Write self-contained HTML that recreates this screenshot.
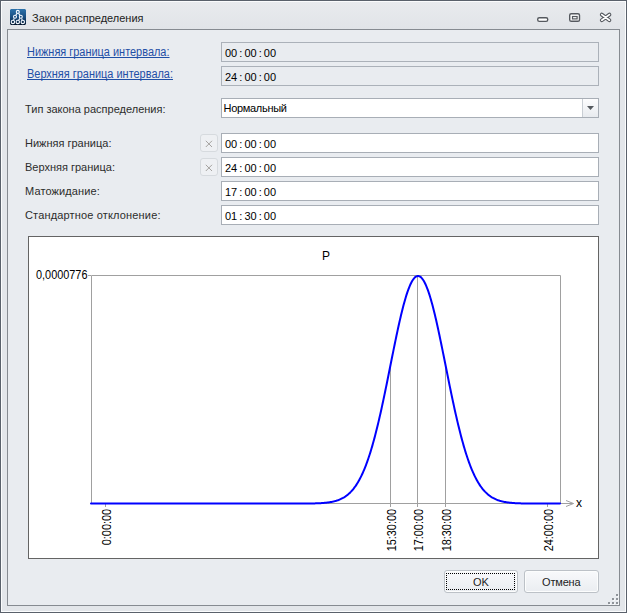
<!DOCTYPE html>
<html><head><meta charset="utf-8">
<style>
*{box-sizing:border-box;margin:0;padding:0}
html,body{width:627px;height:613px;overflow:hidden;background:#e9ecf0}
body{position:relative;font-family:"Liberation Sans",sans-serif;font-size:11px;color:#2c2c2c}
.abs{position:absolute}
#win{left:0;top:0;width:627px;height:613px;border:1px solid #5a616b;background:linear-gradient(#e9ebee,#e1e4e8 28px,#e3e6ea 29px);}
#hl{left:1px;top:1px;width:625px;height:611px;border:1px solid #fbfcfd;border-right-color:#fbfcfd;}
#panel{left:7px;top:29px;width:613px;height:577px;border:1px solid #868b91;background:#e9ecf0}
.t{position:absolute;white-space:pre;line-height:13px}
.link{color:#1f4fa6;text-decoration:underline;text-underline-offset:2px;text-decoration-skip-ink:none}
.edit{position:absolute;left:221px;width:378px;height:20px;border:1px solid #a8aeb6;background:#fff}
.edit.dis{background:#e9ecf0;border-color:#abb1b9}
.val{position:absolute;left:3px;top:4px;white-space:pre;line-height:13px;color:#000;word-spacing:-1px}
.xb{position:absolute;left:200px;width:18px;height:18px;border:1px solid #d6dade;border-radius:3px;background:#eef0f3}
.btn{position:absolute;top:570px;height:23px;border:1px solid #bcc1c7;border-radius:3px;background:linear-gradient(#f8f9fb,#eaedf1);box-shadow:inset 0 0 0 1px #fcfdfd;color:#1e1e1e;text-align:center;line-height:22px}
</style></head><body>
<div id="win" class="abs"></div>
<div id="hl" class="abs"></div>
<!-- title icon -->
<svg class="abs" style="left:10px;top:9px" width="16" height="16" viewBox="0 0 16 16">
<defs><linearGradient id="ig" x1="0" y1="0" x2="0" y2="1"><stop offset="0" stop-color="#2c72ab"/><stop offset="0.55" stop-color="#164a7c"/><stop offset="1" stop-color="#03152b"/></linearGradient></defs>
<path d="M1 0H15L16 1V15L15 16H1L0 15V1Z" fill="url(#ig)"/>
<g fill="none" stroke="#f4f9ff" stroke-width="1.1">
<path d="M7 4.4L5.8 6.3M8.6 4.4L10 6.3M4.2 9.3L3.6 11.1M10 9.3L8.6 11.1M11.6 9.3L12.2 11.1"/>
<circle cx="7.8" cy="2.9" r="1.5"/><circle cx="5" cy="7.8" r="1.5"/><circle cx="10.8" cy="7.8" r="1.5"/>
<circle cx="2.9" cy="12.9" r="1.7"/><circle cx="7.8" cy="12.9" r="1.7"/><circle cx="12.8" cy="12.9" r="1.7"/>
</g></svg>
<div class="t" style="left:32px;top:12px;color:#222">Закон распределения</div>
<!-- title buttons -->
<svg class="abs" style="left:530px;top:8px" width="90" height="20" viewBox="530 8 90 20">
<rect x="537.7" y="17.7" width="10" height="3.7" rx="1.6" fill="#fff" stroke="#55595f" stroke-width="1.4"/>
<rect x="569.7" y="13.7" width="9.8" height="7.6" rx="1.6" fill="#fff" stroke="#55595f" stroke-width="1.4"/>
<rect x="572.5" y="16.5" width="4.6" height="2.4" fill="#fff" stroke="#55595f" stroke-width="1.2"/>
<path d="M601.8 14.6 L609.4 20.2 M609.4 14.6 L601.8 20.2" stroke="#55595f" stroke-width="3.9" stroke-linecap="round"/>
<path d="M601.8 14.6 L609.4 20.2 M609.4 14.6 L601.8 20.2" stroke="#fff" stroke-width="1.7" stroke-linecap="round"/>
</svg>

<div id="panel" class="abs"></div>

<div class="t link" style="left:27px;top:45px;text-underline-offset:1px;font-size:12px;line-height:14px;transform:scaleX(0.912);transform-origin:0 0">Нижняя граница интервала:</div>
<div class="t link" style="left:27px;top:67px;text-underline-offset:1px;font-size:12px;line-height:14px;transform:scaleX(0.912);transform-origin:0 0">Верхняя граница интервала:</div>
<div class="edit dis" style="top:42px"><div class="val">00 : 00 : 00</div></div>
<div class="edit dis" style="top:66px"><div class="val">24 : 00 : 00</div></div>

<div class="t" style="left:25px;top:103px">Тип закона распределения:</div>
<div class="edit" style="top:98px"><div class="val" style="left:1.5px;top:3px;color:#000;word-spacing:0;letter-spacing:-0.3px">Нормальный</div>
<div class="abs" style="left:360px;top:0;width:16px;height:18px;border-left:1px solid #c9ced4;background:linear-gradient(#fdfdfe,#e8ebef)"></div>
<svg class="abs" style="left:365px;top:7px" width="7" height="4" viewBox="0 0 7 4"><path d="M0 0H7L3.5 4Z" fill="#55595e"/></svg>
</div>

<div class="t" style="left:25px;top:137px">Нижняя граница:</div>
<div class="t" style="left:25px;top:161px">Верхняя граница:</div>
<div class="t" style="left:25px;top:185px;letter-spacing:0.12px">Матожидание:</div>
<div class="t" style="left:25px;top:209px;letter-spacing:0.16px">Стандартное отклонение:</div>

<div class="xb" style="top:134px"><svg class="abs" style="left:4px;top:5px" width="8" height="8" viewBox="0 0 8 8"><path d="M0.8 0.8L7 7M7 0.8L0.8 7" stroke="#a09d9b" stroke-width="0.95"/></svg></div>
<div class="xb" style="top:158px"><svg class="abs" style="left:4px;top:5px" width="8" height="8" viewBox="0 0 8 8"><path d="M0.8 0.8L7 7M7 0.8L0.8 7" stroke="#a09d9b" stroke-width="0.95"/></svg></div>

<div class="edit" style="top:133px"><div class="val">00 : 00 : 00</div></div>
<div class="edit" style="top:157px"><div class="val">24 : 00 : 00</div></div>
<div class="edit" style="top:181px"><div class="val">17 : 00 : 00</div></div>
<div class="edit" style="top:205px"><div class="val">01 : 30 : 00</div></div>

<!-- chart -->
<div class="abs" style="left:28px;top:236px;width:571px;height:323px;border:1px solid #646464;background:#fff"></div>
<svg class="abs" style="left:0;top:0" width="627" height="613" viewBox="0 0 627 613" id="chart">
<path d="M91.5 275.5H560.5V503.5" fill="none" stroke="#a0a0a0" stroke-width="1"/>
<path d="M91.5 275.5V503.5H560.5" fill="none" stroke="#a0a0a0" stroke-width="1"/>
<path d="M88 275.5H91" stroke="#a0a0a0" stroke-width="1"/>
<path d="M390.5 364.2V507" stroke="#a0a0a0" stroke-width="1"/>
<path d="M417.5 275.0V507" stroke="#a0a0a0" stroke-width="1"/>
<path d="M445.5 364.2V507" stroke="#a0a0a0" stroke-width="1"/>
<path d="M105.5 503V507" stroke="#a0a0a0" stroke-width="1"/>
<path d="M547.5 503V507" stroke="#a0a0a0" stroke-width="1"/>
<path d="M560 503.5H573.5 M566 500.5L573.5 503.5L566 506.5" fill="none" stroke="#a0a0a0" stroke-width="1"/>
<path d="M91.0,503.60 L91.5,503.60 L92.0,503.60 L92.5,503.60 L93.0,503.60 L93.5,503.60 L94.0,503.60 L94.5,503.60 L95.0,503.60 L95.5,503.60 L96.0,503.60 L96.5,503.60 L97.0,503.60 L97.5,503.60 L98.0,503.60 L98.5,503.60 L99.0,503.60 L99.5,503.60 L100.0,503.60 L100.5,503.60 L101.0,503.60 L101.5,503.60 L102.0,503.60 L102.5,503.60 L103.0,503.60 L103.5,503.60 L104.0,503.60 L104.5,503.60 L105.0,503.60 L105.5,503.60 L106.0,503.60 L106.5,503.60 L107.0,503.60 L107.5,503.60 L108.0,503.60 L108.5,503.60 L109.0,503.60 L109.5,503.60 L110.0,503.60 L110.5,503.60 L111.0,503.60 L111.5,503.60 L112.0,503.60 L112.5,503.60 L113.0,503.60 L113.5,503.60 L114.0,503.60 L114.5,503.60 L115.0,503.60 L115.5,503.60 L116.0,503.60 L116.5,503.60 L117.0,503.60 L117.5,503.60 L118.0,503.60 L118.5,503.60 L119.0,503.60 L119.5,503.60 L120.0,503.60 L120.5,503.60 L121.0,503.60 L121.5,503.60 L122.0,503.60 L122.5,503.60 L123.0,503.60 L123.5,503.60 L124.0,503.60 L124.5,503.60 L125.0,503.60 L125.5,503.60 L126.0,503.60 L126.5,503.60 L127.0,503.60 L127.5,503.60 L128.0,503.60 L128.5,503.60 L129.0,503.60 L129.5,503.60 L130.0,503.60 L130.5,503.60 L131.0,503.60 L131.5,503.60 L132.0,503.60 L132.5,503.60 L133.0,503.60 L133.5,503.60 L134.0,503.60 L134.5,503.60 L135.0,503.60 L135.5,503.60 L136.0,503.60 L136.5,503.60 L137.0,503.60 L137.5,503.60 L138.0,503.60 L138.5,503.60 L139.0,503.60 L139.5,503.60 L140.0,503.60 L140.5,503.60 L141.0,503.60 L141.5,503.60 L142.0,503.60 L142.5,503.60 L143.0,503.60 L143.5,503.60 L144.0,503.60 L144.5,503.60 L145.0,503.60 L145.5,503.60 L146.0,503.60 L146.5,503.60 L147.0,503.60 L147.5,503.60 L148.0,503.60 L148.5,503.60 L149.0,503.60 L149.5,503.60 L150.0,503.60 L150.5,503.60 L151.0,503.60 L151.5,503.60 L152.0,503.60 L152.5,503.60 L153.0,503.60 L153.5,503.60 L154.0,503.60 L154.5,503.60 L155.0,503.60 L155.5,503.60 L156.0,503.60 L156.5,503.60 L157.0,503.60 L157.5,503.60 L158.0,503.60 L158.5,503.60 L159.0,503.60 L159.5,503.60 L160.0,503.60 L160.5,503.60 L161.0,503.60 L161.5,503.60 L162.0,503.60 L162.5,503.60 L163.0,503.60 L163.5,503.60 L164.0,503.60 L164.5,503.60 L165.0,503.60 L165.5,503.60 L166.0,503.60 L166.5,503.60 L167.0,503.60 L167.5,503.60 L168.0,503.60 L168.5,503.60 L169.0,503.60 L169.5,503.60 L170.0,503.60 L170.5,503.60 L171.0,503.60 L171.5,503.60 L172.0,503.60 L172.5,503.60 L173.0,503.60 L173.5,503.60 L174.0,503.60 L174.5,503.60 L175.0,503.60 L175.5,503.60 L176.0,503.60 L176.5,503.60 L177.0,503.60 L177.5,503.60 L178.0,503.60 L178.5,503.60 L179.0,503.60 L179.5,503.60 L180.0,503.60 L180.5,503.60 L181.0,503.60 L181.5,503.60 L182.0,503.60 L182.5,503.60 L183.0,503.60 L183.5,503.60 L184.0,503.60 L184.5,503.60 L185.0,503.60 L185.5,503.60 L186.0,503.60 L186.5,503.60 L187.0,503.60 L187.5,503.60 L188.0,503.60 L188.5,503.60 L189.0,503.60 L189.5,503.60 L190.0,503.60 L190.5,503.60 L191.0,503.60 L191.5,503.60 L192.0,503.60 L192.5,503.60 L193.0,503.60 L193.5,503.60 L194.0,503.60 L194.5,503.60 L195.0,503.60 L195.5,503.60 L196.0,503.60 L196.5,503.60 L197.0,503.60 L197.5,503.60 L198.0,503.60 L198.5,503.60 L199.0,503.60 L199.5,503.60 L200.0,503.60 L200.5,503.60 L201.0,503.60 L201.5,503.60 L202.0,503.60 L202.5,503.60 L203.0,503.60 L203.5,503.60 L204.0,503.60 L204.5,503.60 L205.0,503.60 L205.5,503.60 L206.0,503.60 L206.5,503.60 L207.0,503.60 L207.5,503.60 L208.0,503.60 L208.5,503.60 L209.0,503.60 L209.5,503.60 L210.0,503.60 L210.5,503.60 L211.0,503.60 L211.5,503.60 L212.0,503.60 L212.5,503.60 L213.0,503.60 L213.5,503.60 L214.0,503.60 L214.5,503.60 L215.0,503.60 L215.5,503.60 L216.0,503.60 L216.5,503.60 L217.0,503.60 L217.5,503.60 L218.0,503.60 L218.5,503.60 L219.0,503.60 L219.5,503.60 L220.0,503.60 L220.5,503.60 L221.0,503.60 L221.5,503.60 L222.0,503.60 L222.5,503.60 L223.0,503.60 L223.5,503.60 L224.0,503.60 L224.5,503.60 L225.0,503.60 L225.5,503.60 L226.0,503.60 L226.5,503.60 L227.0,503.60 L227.5,503.60 L228.0,503.60 L228.5,503.60 L229.0,503.60 L229.5,503.60 L230.0,503.60 L230.5,503.60 L231.0,503.60 L231.5,503.60 L232.0,503.60 L232.5,503.60 L233.0,503.60 L233.5,503.60 L234.0,503.60 L234.5,503.60 L235.0,503.60 L235.5,503.60 L236.0,503.60 L236.5,503.60 L237.0,503.60 L237.5,503.60 L238.0,503.60 L238.5,503.60 L239.0,503.60 L239.5,503.60 L240.0,503.60 L240.5,503.60 L241.0,503.60 L241.5,503.60 L242.0,503.60 L242.5,503.60 L243.0,503.60 L243.5,503.60 L244.0,503.60 L244.5,503.60 L245.0,503.60 L245.5,503.60 L246.0,503.60 L246.5,503.60 L247.0,503.60 L247.5,503.60 L248.0,503.60 L248.5,503.60 L249.0,503.60 L249.5,503.60 L250.0,503.60 L250.5,503.60 L251.0,503.60 L251.5,503.60 L252.0,503.60 L252.5,503.60 L253.0,503.60 L253.5,503.60 L254.0,503.60 L254.5,503.60 L255.0,503.60 L255.5,503.60 L256.0,503.60 L256.5,503.60 L257.0,503.60 L257.5,503.60 L258.0,503.60 L258.5,503.60 L259.0,503.60 L259.5,503.60 L260.0,503.60 L260.5,503.60 L261.0,503.60 L261.5,503.60 L262.0,503.60 L262.5,503.60 L263.0,503.60 L263.5,503.60 L264.0,503.60 L264.5,503.60 L265.0,503.60 L265.5,503.60 L266.0,503.60 L266.5,503.60 L267.0,503.60 L267.5,503.60 L268.0,503.60 L268.5,503.60 L269.0,503.60 L269.5,503.60 L270.0,503.60 L270.5,503.60 L271.0,503.60 L271.5,503.60 L272.0,503.60 L272.5,503.60 L273.0,503.60 L273.5,503.60 L274.0,503.60 L274.5,503.60 L275.0,503.60 L275.5,503.60 L276.0,503.60 L276.5,503.60 L277.0,503.60 L277.5,503.60 L278.0,503.60 L278.5,503.60 L279.0,503.60 L279.5,503.60 L280.0,503.60 L280.5,503.60 L281.0,503.60 L281.5,503.60 L282.0,503.60 L282.5,503.60 L283.0,503.60 L283.5,503.60 L284.0,503.60 L284.5,503.60 L285.0,503.60 L285.5,503.60 L286.0,503.60 L286.5,503.60 L287.0,503.60 L287.5,503.60 L288.0,503.60 L288.5,503.60 L289.0,503.60 L289.5,503.60 L290.0,503.60 L290.5,503.59 L291.0,503.59 L291.5,503.59 L292.0,503.59 L292.5,503.59 L293.0,503.59 L293.5,503.59 L294.0,503.59 L294.5,503.59 L295.0,503.59 L295.5,503.59 L296.0,503.59 L296.5,503.59 L297.0,503.58 L297.5,503.58 L298.0,503.58 L298.5,503.58 L299.0,503.58 L299.5,503.58 L300.0,503.58 L300.5,503.57 L301.0,503.57 L301.5,503.57 L302.0,503.57 L302.5,503.56 L303.0,503.56 L303.5,503.56 L304.0,503.56 L304.5,503.55 L305.0,503.55 L305.5,503.54 L306.0,503.54 L306.5,503.53 L307.0,503.53 L307.5,503.52 L308.0,503.52 L308.5,503.51 L309.0,503.51 L309.5,503.50 L310.0,503.49 L310.5,503.48 L311.0,503.48 L311.5,503.47 L312.0,503.46 L312.5,503.45 L313.0,503.44 L313.5,503.42 L314.0,503.41 L314.5,503.40 L315.0,503.38 L315.5,503.37 L316.0,503.35 L316.5,503.34 L317.0,503.32 L317.5,503.30 L318.0,503.28 L318.5,503.26 L319.0,503.23 L319.5,503.21 L320.0,503.18 L320.5,503.16 L321.0,503.13 L321.5,503.10 L322.0,503.06 L322.5,503.03 L323.0,502.99 L323.5,502.95 L324.0,502.91 L324.5,502.87 L325.0,502.82 L325.5,502.77 L326.0,502.72 L326.5,502.67 L327.0,502.61 L327.5,502.55 L328.0,502.48 L328.5,502.41 L329.0,502.34 L329.5,502.27 L330.0,502.19 L330.5,502.10 L331.0,502.02 L331.5,501.92 L332.0,501.83 L332.5,501.72 L333.0,501.62 L333.5,501.50 L334.0,501.38 L334.5,501.26 L335.0,501.13 L335.5,500.99 L336.0,500.84 L336.5,500.69 L337.0,500.53 L337.5,500.36 L338.0,500.19 L338.5,500.01 L339.0,499.81 L339.5,499.61 L340.0,499.40 L340.5,499.18 L341.0,498.95 L341.5,498.71 L342.0,498.46 L342.5,498.20 L343.0,497.93 L343.5,497.64 L344.0,497.35 L344.5,497.04 L345.0,496.71 L345.5,496.38 L346.0,496.02 L346.5,495.66 L347.0,495.28 L347.5,494.88 L348.0,494.47 L348.5,494.04 L349.0,493.60 L349.5,493.14 L350.0,492.66 L350.5,492.16 L351.0,491.65 L351.5,491.11 L352.0,490.55 L352.5,489.98 L353.0,489.38 L353.5,488.77 L354.0,488.13 L354.5,487.47 L355.0,486.78 L355.5,486.08 L356.0,485.34 L356.5,484.59 L357.0,483.81 L357.5,483.00 L358.0,482.17 L358.5,481.32 L359.0,480.43 L359.5,479.52 L360.0,478.58 L360.5,477.62 L361.0,476.62 L361.5,475.60 L362.0,474.54 L362.5,473.46 L363.0,472.35 L363.5,471.21 L364.0,470.03 L364.5,468.83 L365.0,467.59 L365.5,466.32 L366.0,465.02 L366.5,463.69 L367.0,462.32 L367.5,460.92 L368.0,459.49 L368.5,458.03 L369.0,456.53 L369.5,455.00 L370.0,453.44 L370.5,451.84 L371.0,450.21 L371.5,448.54 L372.0,446.85 L372.5,445.12 L373.0,443.35 L373.5,441.56 L374.0,439.73 L374.5,437.87 L375.0,435.98 L375.5,434.05 L376.0,432.10 L376.5,430.11 L377.0,428.09 L377.5,426.05 L378.0,423.97 L378.5,421.87 L379.0,419.73 L379.5,417.57 L380.0,415.38 L380.5,413.17 L381.0,410.93 L381.5,408.67 L382.0,406.38 L382.5,404.08 L383.0,401.75 L383.5,399.40 L384.0,397.03 L384.5,394.64 L385.0,392.24 L385.5,389.82 L386.0,387.38 L386.5,384.94 L387.0,382.48 L387.5,380.01 L388.0,377.53 L388.5,375.04 L389.0,372.55 L389.5,370.05 L390.0,367.55 L390.5,365.05 L391.0,362.55 L391.5,360.05 L392.0,357.56 L392.5,355.07 L393.0,352.59 L393.5,350.12 L394.0,347.65 L394.5,345.20 L395.0,342.77 L395.5,340.35 L396.0,337.95 L396.5,335.56 L397.0,333.20 L397.5,330.87 L398.0,328.56 L398.5,326.27 L399.0,324.02 L399.5,321.79 L400.0,319.60 L400.5,317.45 L401.0,315.33 L401.5,313.24 L402.0,311.20 L402.5,309.20 L403.0,307.25 L403.5,305.34 L404.0,303.48 L404.5,301.66 L405.0,299.90 L405.5,298.19 L406.0,296.53 L406.5,294.92 L407.0,293.38 L407.5,291.89 L408.0,290.46 L408.5,289.09 L409.0,287.78 L409.5,286.54 L410.0,285.36 L410.5,284.25 L411.0,283.20 L411.5,282.23 L412.0,281.32 L412.5,280.47 L413.0,279.70 L413.5,279.01 L414.0,278.38 L414.5,277.82 L415.0,277.34 L415.5,276.93 L416.0,276.60 L416.5,276.34 L417.0,276.15 L417.5,276.04 L418.0,276.00 L418.5,276.04 L419.0,276.15 L419.5,276.34 L420.0,276.60 L420.5,276.93 L421.0,277.34 L421.5,277.82 L422.0,278.38 L422.5,279.01 L423.0,279.70 L423.5,280.47 L424.0,281.32 L424.5,282.23 L425.0,283.20 L425.5,284.25 L426.0,285.36 L426.5,286.54 L427.0,287.78 L427.5,289.09 L428.0,290.46 L428.5,291.89 L429.0,293.38 L429.5,294.92 L430.0,296.53 L430.5,298.19 L431.0,299.90 L431.5,301.66 L432.0,303.48 L432.5,305.34 L433.0,307.25 L433.5,309.20 L434.0,311.20 L434.5,313.24 L435.0,315.33 L435.5,317.45 L436.0,319.60 L436.5,321.79 L437.0,324.02 L437.5,326.27 L438.0,328.56 L438.5,330.87 L439.0,333.20 L439.5,335.56 L440.0,337.95 L440.5,340.35 L441.0,342.77 L441.5,345.20 L442.0,347.65 L442.5,350.12 L443.0,352.59 L443.5,355.07 L444.0,357.56 L444.5,360.05 L445.0,362.55 L445.5,365.05 L446.0,367.55 L446.5,370.05 L447.0,372.55 L447.5,375.04 L448.0,377.53 L448.5,380.01 L449.0,382.48 L449.5,384.94 L450.0,387.38 L450.5,389.82 L451.0,392.24 L451.5,394.64 L452.0,397.03 L452.5,399.40 L453.0,401.75 L453.5,404.08 L454.0,406.38 L454.5,408.67 L455.0,410.93 L455.5,413.17 L456.0,415.38 L456.5,417.57 L457.0,419.73 L457.5,421.87 L458.0,423.97 L458.5,426.05 L459.0,428.09 L459.5,430.11 L460.0,432.10 L460.5,434.05 L461.0,435.98 L461.5,437.87 L462.0,439.73 L462.5,441.56 L463.0,443.35 L463.5,445.12 L464.0,446.85 L464.5,448.54 L465.0,450.21 L465.5,451.84 L466.0,453.44 L466.5,455.00 L467.0,456.53 L467.5,458.03 L468.0,459.49 L468.5,460.92 L469.0,462.32 L469.5,463.69 L470.0,465.02 L470.5,466.32 L471.0,467.59 L471.5,468.83 L472.0,470.03 L472.5,471.21 L473.0,472.35 L473.5,473.46 L474.0,474.54 L474.5,475.60 L475.0,476.62 L475.5,477.62 L476.0,478.58 L476.5,479.52 L477.0,480.43 L477.5,481.32 L478.0,482.17 L478.5,483.00 L479.0,483.81 L479.5,484.59 L480.0,485.34 L480.5,486.08 L481.0,486.78 L481.5,487.47 L482.0,488.13 L482.5,488.77 L483.0,489.38 L483.5,489.98 L484.0,490.55 L484.5,491.11 L485.0,491.65 L485.5,492.16 L486.0,492.66 L486.5,493.14 L487.0,493.60 L487.5,494.04 L488.0,494.47 L488.5,494.88 L489.0,495.28 L489.5,495.66 L490.0,496.02 L490.5,496.38 L491.0,496.71 L491.5,497.04 L492.0,497.35 L492.5,497.64 L493.0,497.93 L493.5,498.20 L494.0,498.46 L494.5,498.71 L495.0,498.95 L495.5,499.18 L496.0,499.40 L496.5,499.61 L497.0,499.81 L497.5,500.01 L498.0,500.19 L498.5,500.36 L499.0,500.53 L499.5,500.69 L500.0,500.84 L500.5,500.99 L501.0,501.13 L501.5,501.26 L502.0,501.38 L502.5,501.50 L503.0,501.62 L503.5,501.72 L504.0,501.83 L504.5,501.92 L505.0,502.02 L505.5,502.10 L506.0,502.19 L506.5,502.27 L507.0,502.34 L507.5,502.41 L508.0,502.48 L508.5,502.55 L509.0,502.61 L509.5,502.67 L510.0,502.72 L510.5,502.77 L511.0,502.82 L511.5,502.87 L512.0,502.91 L512.5,502.95 L513.0,502.99 L513.5,503.03 L514.0,503.06 L514.5,503.10 L515.0,503.13 L515.5,503.16 L516.0,503.18 L516.5,503.21 L517.0,503.23 L517.5,503.26 L518.0,503.28 L518.5,503.30 L519.0,503.32 L519.5,503.34 L520.0,503.35 L520.5,503.37 L521.0,503.38 L521.5,503.40 L522.0,503.41 L522.5,503.42 L523.0,503.44 L523.5,503.45 L524.0,503.46 L524.5,503.47 L525.0,503.48 L525.5,503.48 L526.0,503.49 L526.5,503.50 L527.0,503.51 L527.5,503.51 L528.0,503.52 L528.5,503.52 L529.0,503.53 L529.5,503.53 L530.0,503.54 L530.5,503.54 L531.0,503.55 L531.5,503.55 L532.0,503.56 L532.5,503.56 L533.0,503.56 L533.5,503.56 L534.0,503.57 L534.5,503.57 L535.0,503.57 L535.5,503.57 L536.0,503.58 L536.5,503.58 L537.0,503.58 L537.5,503.58 L538.0,503.58 L538.5,503.58 L539.0,503.58 L539.5,503.59 L540.0,503.59 L540.5,503.59 L541.0,503.59 L541.5,503.59 L542.0,503.59 L542.5,503.59 L543.0,503.59 L543.5,503.59 L544.0,503.59 L544.5,503.59 L545.0,503.59 L545.5,503.59 L546.0,503.60 L546.5,503.60 L547.0,503.60 L547.5,503.60 L548.0,503.60 L548.5,503.60 L549.0,503.60 L549.5,503.60 L550.0,503.60 L550.5,503.60 L551.0,503.60 L551.5,503.60 L552.0,503.60 L552.5,503.60 L553.0,503.60 L553.5,503.60 L554.0,503.60 L554.5,503.60 L555.0,503.60 L555.5,503.60 L556.0,503.60 L556.5,503.60 L557.0,503.60 L557.5,503.60 L558.0,503.60 L558.5,503.60 L559.0,503.60 L559.5,503.60 L560.0,503.60" fill="none" stroke="#0000ff" stroke-width="2" stroke-linecap="round"/>
<text x="36" y="279" font-family="Liberation Sans" font-size="12" fill="#000" textLength="51.5" lengthAdjust="spacingAndGlyphs">0,0000776</text>
<text x="322" y="260" font-family="Liberation Sans" font-size="12" fill="#000">P</text>
<text x="576" y="507" font-family="Liberation Sans" font-size="12" fill="#000">x</text>
<text transform="translate(111,509) rotate(-90)" text-anchor="end" font-family="Liberation Sans" font-size="12" fill="#000" textLength="36.2" lengthAdjust="spacingAndGlyphs">0:00:00</text>
<text transform="translate(396,509) rotate(-90)" text-anchor="end" font-family="Liberation Sans" font-size="12" fill="#000" textLength="42.3" lengthAdjust="spacingAndGlyphs">15:30:00</text>
<text transform="translate(423,509) rotate(-90)" text-anchor="end" font-family="Liberation Sans" font-size="12" fill="#000" textLength="42.3" lengthAdjust="spacingAndGlyphs">17:00:00</text>
<text transform="translate(451,509) rotate(-90)" text-anchor="end" font-family="Liberation Sans" font-size="12" fill="#000" textLength="42.3" lengthAdjust="spacingAndGlyphs">18:30:00</text>
<text transform="translate(553,509) rotate(-90)" text-anchor="end" font-family="Liberation Sans" font-size="12" fill="#000" textLength="42.3" lengthAdjust="spacingAndGlyphs">24:00:00</text>
</svg>

<div class="btn" style="left:444px;width:74px">OK</div>
<div class="abs" style="left:446px;top:573px;width:69px;height:17px;border:1px dotted #000"></div>
<div class="btn" style="left:524px;width:75px;letter-spacing:-0.2px;text-indent:-0.5px">Отмена</div>

<svg class="abs" style="left:600px;top:590px" width="20" height="16" viewBox="600 590 20 16">
<g fill="#f6f7f9"><rect x="617" y="595" width="2" height="2"/><rect x="613" y="599" width="2" height="2"/><rect x="617" y="599" width="2" height="2"/><rect x="609" y="603" width="2" height="2"/><rect x="613" y="603" width="2" height="2"/><rect x="617" y="603" width="2" height="2"/></g>
<g fill="#8f949a"><rect x="616" y="594" width="2" height="2"/><rect x="612" y="598" width="2" height="2"/><rect x="616" y="598" width="2" height="2"/><rect x="608" y="602" width="2" height="2"/><rect x="612" y="602" width="2" height="2"/><rect x="616" y="602" width="2" height="2"/></g>
</svg>
</body></html>
